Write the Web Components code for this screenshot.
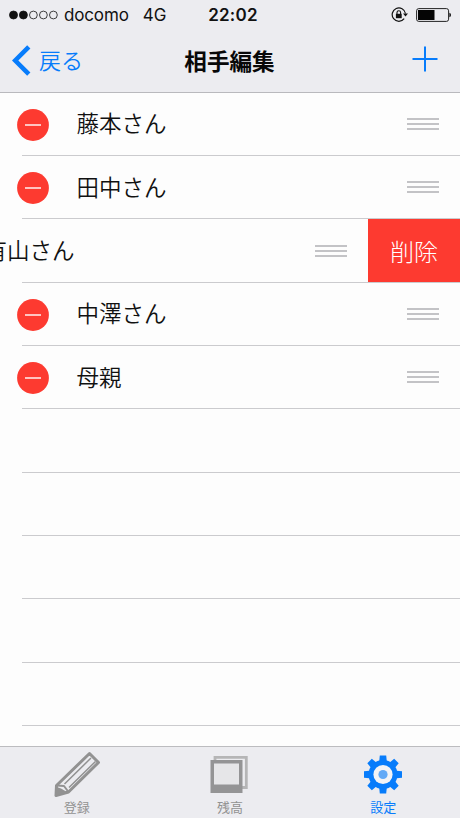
<!DOCTYPE html>
<html lang="ja">
<head>
<meta charset="utf-8">
<title>相手編集</title>
<style>
  html, body { margin: 0; height: 100%; }
  body {
    --blue: #077cfb;
    --red: #fd3a30;
    --bar: #ececf0;
    background: #fdfdfd;
    color: #111;
    font-family: Inter, "Noto Sans CJK JP", sans-serif;
    overflow: hidden;
  }
</style>
</head>
<body>
<phone-screen>
  <status-bar slot="top" carrier="docomo" network="4G" time="22:02"></status-bar>
  <nav-bar slot="top" back="戻る">相手編集</nav-bar>
  <list-row>藤本さん</list-row>
  <list-row>田中さん</list-row>
  <list-row action="削除">有山さん</list-row>
  <list-row>中澤さん</list-row>
  <list-row>母親</list-row>
  <list-row empty></list-row>
  <list-row empty></list-row>
  <list-row empty></list-row>
  <list-row empty></list-row>
  <list-row empty></list-row>
  <tab-bar slot="bottom">
    <tab-item icon="pencil">登録</tab-item>
    <tab-item icon="photos">残高</tab-item>
    <tab-item icon="gear" active>設定</tab-item>
  </tab-bar>
</phone-screen>

<script>
class PhoneScreen extends HTMLElement {
  connectedCallback() {
    this.attachShadow({ mode: 'open' }).innerHTML = `
      <style>
        :host { display: flex; flex-direction: column; width: 460px; height: 818px; overflow: hidden; }
        header { flex: none; background: var(--bar); border-bottom: 1px solid #b9b9bd; }
        main { flex: 1; min-height: 0; margin-top: -0.35px; overflow: hidden; }
      </style>
      <header><slot name="top"></slot></header>
      <main><slot></slot></main>
      <slot name="bottom"></slot>`;
  }
}

class StatusBar extends HTMLElement {
  connectedCallback() {
    const attr = (name) => this.getAttribute(name);
    this.attachShadow({ mode: 'open' }).innerHTML = `
      <style>
        :host {
          display: grid;
          grid-template-columns: 1fr auto 1fr;
          align-items: center;
          height: 30px;
          padding: 0 9px;
          font-size: 17px;
          line-height: 30px;
        }
        .left, .right { display: flex; align-items: center; }
        .right { justify-content: flex-end; gap: 8px; }
        .carrier { margin: 0 14px 0 6px; letter-spacing: -0.15px; }
        .time { margin-left: 6px; font-weight: 600; letter-spacing: 0.2px; }
        svg { display: block; }
      </style>
      <div class="left">
        <svg width="49" height="10" viewBox="0 0 49 10" stroke="#111" stroke-width="0.8" fill="none">
          <circle cx="4.5" cy="5" r="4" fill="#111"/>
          <circle cx="14.4" cy="5" r="4" fill="#111"/>
          <circle cx="24.4" cy="5" r="3.9"/>
          <circle cx="34.4" cy="5" r="3.9"/>
          <circle cx="44.4" cy="5" r="3.9"/>
        </svg>
        <span class="carrier">${attr('carrier')}</span>
        <span>${attr('network')}</span>
      </div>
      <span class="time">${attr('time')}</span>
      <div class="right">
        <svg width="17" height="16" viewBox="0 0 17 16" fill="none" stroke="#111">
          <path d="M13.2 11.7A6.7 6.7 0 1 1 14.5 6.5" stroke-width="1.2"/>
          <path d="M12 6.6h5l-2.5 3z" fill="#111" stroke="none"/>
          <rect x="4.9" y="6.8" width="5.8" height="4.4" fill="#111" stroke="none"/>
          <path d="M6 7V5.5a1.8 1.8 0 0 1 3.6 0V7" stroke-width="1.1"/>
        </svg>
        <svg width="35" height="14" viewBox="0 0 35 14">
          <rect x="0.6" y="0.6" width="32" height="12.8" rx="2.2" fill="none" stroke="#222" stroke-width="1"/>
          <path d="M2 2h16.500v10H2z" fill="#050505"/>
          <path d="M33.4 4.800q1.600.3 1.600 2.200t-1.600 2.200z" fill="#111"/>
        </svg>
      </div>`;
  }
}

class NavBar extends HTMLElement {
  connectedCallback() {
    this.attachShadow({ mode: 'open' }).innerHTML = `
      <style>
        :host {
          display: grid;
          grid-template-columns: 1fr auto 1fr;
          align-items: center;
          height: 62px;
          padding: 0 22px 0 12px;
        }
        button {
          display: flex;
          align-items: center;
          gap: 8px;
          padding: 0;
          border: 0;
          background: none;
          color: var(--blue);
          font: 350 22px/30px "Noto Sans CJK JP", sans-serif;
        }
        .back { padding-bottom: 1px; }
        .back span { padding-bottom: 3px; }
        .add { justify-self: end; padding-bottom: 4px; }
        h1 { margin: 0 0 1px 9px; font: 700 22.6px/30px "Noto Sans CJK JP", sans-serif; color: #080808; }
        svg { display: block; }
      </style>
      <button class="back">
        <svg width="19" height="31" viewBox="0 0 19 31" fill="none" stroke="currentColor" stroke-width="4.6"><path d="M16.800 1.800L3.200 15.500l13.600 13.700"/></svg>
        <span>${this.getAttribute('back')}</span>
      </button>
      <h1><slot></slot></h1>
      <button class="add" aria-label="追加">
        <svg width="26" height="26" viewBox="0 0 26 26" stroke="currentColor" stroke-width="2"><path d="M13 .5v25M.5 13h25"/></svg>
      </button>`;
  }
}

class ListRow extends HTMLElement {
  connectedCallback() {
    const action = this.getAttribute('action');
    const cell = this.hasAttribute('empty') ? '' : `
      <div class="cell">
        <svg class="minus" width="32" height="32" viewBox="0 0 32 32">
          <circle cx="16" cy="16" r="15.9" fill="var(--red)"/>
          <path d="M8 16h16" stroke="#fff" stroke-width="1.4"/>
        </svg>
        <span class="name"><slot></slot></span>
        <svg width="32" height="14" viewBox="0 0 32 14" stroke="#c3c3c6" stroke-width="1.9"><path d="M0 2h32M0 7h32M0 12h32"/></svg>
      </div>`;
    this.attachShadow({ mode: 'open' }).innerHTML = `
      <style>
        :host { display: grid; grid-template-rows: 1fr 1px; height: 63.35px; overflow: hidden; }
        /* end alignment slides the cell out to the left when the action is shown */
        .content { display: flex; justify-content: flex-end; min-width: 0; overflow: hidden; }
        .cell {
          flex: none;
          display: flex;
          align-items: center;
          box-sizing: border-box;
          width: 460px;
          padding: 0 21.500px 0 17px;
        }
        .minus { margin-top: 2px; }
        .name {
          flex: 1;
          margin-left: 27.500px;
          padding-bottom: 3px;
          font: 350 22.5px/30px "Noto Sans CJK JP", sans-serif;
        }
        .action {
          flex: none;
          width: 92px;
          border: 0;
          padding: 0;
          background: var(--red);
          color: #fff;
          font: 300 24px/30px "Noto Sans CJK JP", sans-serif;
        }
        .line { margin-left: 22px; background: #cbcbce; }
        svg { display: block; flex: none; }
      </style>
      <div class="content">${cell}${action ? `<button class="action">${action}</button>` : ''}</div>
      <div class="line"></div>`;
  }
}

class TabBar extends HTMLElement {
  connectedCallback() {
    this.attachShadow({ mode: 'open' }).innerHTML = `
      <style>
        :host {
          flex: none;
          display: grid;
          grid-template-columns: repeat(3, 1fr);
          box-sizing: border-box;
          height: 72px;
          background: var(--bar);
          border-top: 1px solid #bcbcbf;
        }
      </style>
      <slot></slot>`;
  }
}

const ICONS = {
  pencil: `
    <g fill="none" stroke="#929292" stroke-linejoin="round">
      <path d="M2.5 30.500L35.500 -1.500L44.500 7.500L14.500 37L2 40.500Z" stroke-width="3"/>
      <path d="M1.500 31.500L7 33.500L13 37L2 41Z" fill="#929292" stroke="none"/>
      <path d="M3 30.500L10 31L14.500 37" stroke-width="2"/>
      <path d="M10.500 29L37 3M15 32.500L41.500 6.500" stroke-width="1.500"/>
    </g>`,
  photos: `
    <path d="M8 5V2.300h31.300v30.200H35" fill="none" stroke="#b5b5b6" stroke-width="2.800"/>
    <path d="M3.500 5h32v33h-32z" fill="#949495"/>
    <path d="M7 8.500h25v21H7z" fill="#e6e6e8"/>`,
  gear: `
    <g transform="translate(23 19.500)" fill="currentColor">
      ${[0, 45, 90, 135, 180, 225, 270, 315].map((a) => `<path d="M-3.200 -19H3.200L4 -11H-4Z" transform="rotate(${a})"/>`).join('')}
      <circle r="14.500"/>
      <circle r="9.600" fill="#f2f3f6"/>
      <circle r="4.600" fill="#62a9f6"/>
    </g>`,
};

class TabItem extends HTMLElement {
  connectedCallback() {
    this.attachShadow({ mode: 'open' }).innerHTML = `
      <style>
        :host {
          display: flex;
          flex-direction: column;
          align-items: center;
          padding-top: 8px;
          color: #929292;
          font: 400 13px/18px "Noto Sans CJK JP", sans-serif;
        }
        :host([active]) { color: var(--blue); }
        svg { display: block; overflow: visible; margin-bottom: 5px; }
      </style>
      <svg width="46" height="38" viewBox="0 0 46 38">${ICONS[this.getAttribute('icon')]}</svg>
      <span><slot></slot></span>`;
  }
}

customElements.define('phone-screen', PhoneScreen);
customElements.define('status-bar', StatusBar);
customElements.define('nav-bar', NavBar);
customElements.define('list-row', ListRow);
customElements.define('tab-bar', TabBar);
customElements.define('tab-item', TabItem);
</script>
</body>
</html>
